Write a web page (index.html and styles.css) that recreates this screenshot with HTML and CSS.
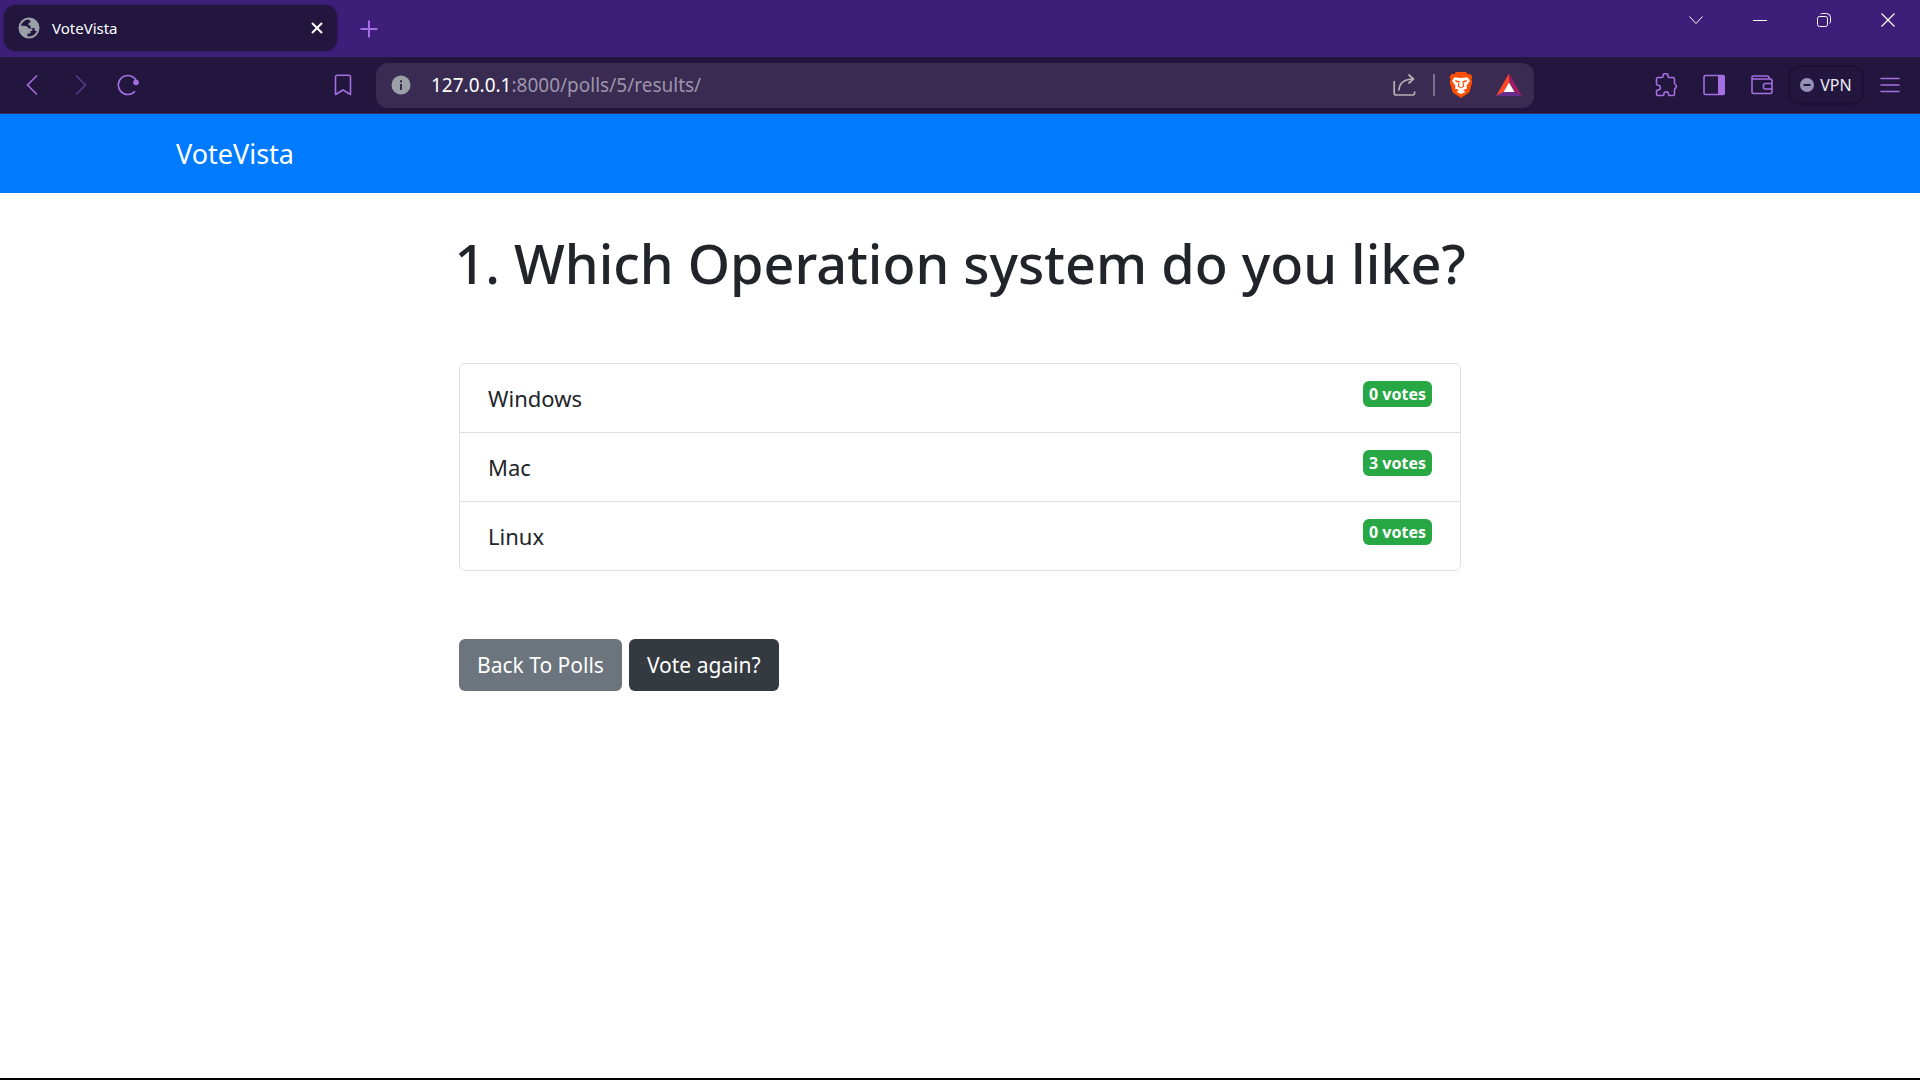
FILE: index.html
```html
<!DOCTYPE html>
<html lang="en">
<head>
<meta charset="utf-8">
<meta name="viewport" content="width=device-width, initial-scale=1">
<title>VoteVista</title>
<link rel="stylesheet" href="styles.css">
</head>
<body>
<header class="browser">
  <div class="tabstrip">
    <div class="tab">
      <svg class="tab-icon" width="22" height="22" viewBox="0 0 22 22"><circle cx="11" cy="11" r="9.5" fill="#22163f" stroke="#9aa0a8" stroke-width="2"/><path d="M11 1.5c5 0 9.500 4 9.500 9.500l-1 2.500c-1 1-3 .5-3-1v-1.500h-4V8.500h-2V6.500c0-1 2-.5 2-2s-2-1-2-3zM2 8.500l5.500.5c1.500 0 3 1.500 3 2.500h3c1.500 0 1.500 2.500 0 2.500h-1v2.500H9.500V20C5 20 1 15.500 1.500 11z" fill="#9aa0a8"/></svg>
      <span class="tab-title">VoteVista</span>
      <button class="icon-btn tab-close" aria-label="Close tab"><svg width="12" height="12" viewBox="0 0 12 12" fill="none" stroke="#fff" stroke-width="2"><path d="M1 1l10 10M11 1L1 11"/></svg></button>
    </div>
    <button class="icon-btn new-tab" aria-label="New tab"><svg width="18" height="18" viewBox="0 0 18 18" fill="none" stroke="#a46fe0" stroke-width="2"><path d="M9 .5v17M.5 9h17"/></svg></button>
    <div class="window-controls">
      <button class="icon-btn" aria-label="Search tabs"><svg width="14" height="14" viewBox="0 0 14 14" fill="none" stroke="#fff"><path d="M.5 3.500L7 10.500l6.500-7"/></svg></button>
      <button class="icon-btn" aria-label="Minimize"><svg width="14" height="14" viewBox="0 0 14 14" fill="none" stroke="#fff"><path d="M0 7.500h14"/></svg></button>
      <button class="icon-btn" aria-label="Restore"><svg width="14" height="14" viewBox="0 0 14 14" fill="none" stroke="#fff"><rect x=".5" y="3.500" width="10" height="10" rx="2"/><path d="M3.500 1.200Q4.300.5 5.500.5h4q4 0 4 4v4q0 1.500-1 2"/></svg></button>
      <button class="icon-btn" aria-label="Close"><svg width="14" height="14" viewBox="0 0 14 14" fill="none" stroke="#fff" stroke-width="1.200"><path d="M.5.5l13 13M13.500.5l-13 13"/></svg></button>
    </div>
  </div>
  <div class="toolbar">
    <div class="nav-buttons">
      <button class="icon-btn" aria-label="Back"><svg width="22" height="22" viewBox="0 0 22 22" fill="none" stroke="#a46fe0" stroke-width="1.600"><path d="M16 1.500L6.500 11l9.500 9.500"/></svg></button>
      <button class="icon-btn" aria-label="Forward" disabled><svg width="22" height="22" viewBox="0 0 22 22" fill="none" stroke="#5c3a87" stroke-width="1.600"><path d="M7 1.500L16.500 11 7 20.500"/></svg></button>
      <button class="icon-btn" aria-label="Reload"><svg width="22" height="22" viewBox="0 0 22 22" fill="none" stroke="#a46fe0" stroke-width="1.600"><path d="M18 17.200A9.500 9.500 0 1 1 19.200 6.500"/><circle cx="19" cy="8.500" r="2.800" fill="#a46fe0" stroke="none"/></svg></button>
      <button class="icon-btn bookmark" aria-label="Bookmark this page"><svg width="22" height="22" viewBox="0 0 22 22" fill="none" stroke="#a46fe0" stroke-width="1.600" stroke-linejoin="round"><path d="M5.500 1.300h11q2 0 2 2v17.200L11 16l-7.500 4.500V3.300q0-2 2-2z"/></svg></button>
    </div>
    <div class="address-bar">
      <button class="icon-btn site-info" aria-label="Site information"><svg width="20" height="20" viewBox="0 0 20 20"><circle cx="10" cy="10" r="9.500" fill="#9aa0a6"/><path d="M9 9h2v6H9zM9 5.300h2v2.200H9z" fill="#392b52"/></svg></button>
      <label class="host" for="url">127.0.0.1</label><input class="url" id="url" type="text" value=":8000/polls/5/results/" spellcheck="false">
      <div class="address-actions">
        <button class="icon-btn" aria-label="Share"><svg width="24" height="24" viewBox="0 0 24 24" fill="none" stroke="#b4b1b5" stroke-width="1.700"><path d="M2.200 8v12q0 2 2 2h17q1.500 0 1.500-3.500M7 17.500c0-6 4-11 14-11.500M16.500 1.500L21.500 6l-5 4.500"/></svg></button>
        <span class="divider"></span>
        <button class="icon-btn" aria-label="Brave Shields"><svg width="24" height="26" viewBox="0 0 24 26"><path d="M7 0h10l2 2.200 2.500-.2L23.500 5l-1 2 .8 3-3 10.500L12 26l-8.300-5.500L.7 10l.8-3-1-2 2-3L5 2.200z" fill="#fb4f04"/><path d="M5.500 5.300l6.500.8 6.500-.8 2.500 3.500-3.500 5 .5 2.700-4 1.500 2.500 2L12 22l-4.500-2 2.500-2-4-1.500.5-2.700-3.500-5z" fill="#fff"/><path d="M5.500 8l5 1v1.200L10 14l2 1.500 2-1.500-.5-3.800V9l5-1-1.500 2-2.500.5.8 4-3.300 2-3.300-2 .8-4L7 10z" fill="#fb4f04"/></svg></button>
        <button class="icon-btn" aria-label="Brave Rewards"><svg width="26" height="24" viewBox="0 0 26 24"><path d="M13 .5L0 23l7.500-4L13 9.500z" fill="#ff4724"/><path d="M13 .5L26 23l-7.500-4L13 9.500z" fill="#9e1f63"/><path d="M0 23h26l-7.500-4h-11z" fill="#662d91"/><path d="M13 9.500L7.500 19h11z" fill="#fff"/></svg></button>
      </div>
    </div>
    <div class="tools">
      <button class="icon-btn" aria-label="Extensions"><svg width="24" height="24" viewBox="0 0 24 24" fill="none" stroke="#a46fe0" stroke-width="1.600" stroke-linejoin="round"><path d="M4 4.500h4c1 0 1-1 1-1.500a2.500 2.500 0 0 1 5 0c0 .5 0 1.500 1 1.500h4q1.500 0 1.500 1.500v4c0 1 1 1.500 1.500 2.300a2.300 2.300 0 0 1 0 2.400c-.5.8-1.500 1-1.500 2V21q0 1.500-1.500 1.500h-3.500c-1 0-1-.5-1-1.500a2.300 2.300 0 0 0-4.600 0c0 1 0 1.500-1 1.500H4q-1.500 0-1.500-1.500v-3c0-1 .5-1 1.500-1a2.400 2.400 0 0 0 0-4.800c-1 0-1.500 0-1.500-1V6Q2.500 4.500 4 4.500z"/></svg></button>
      <button class="icon-btn" aria-label="Sidebar"><svg width="22" height="22" viewBox="0 0 22 22"><rect x="1" y="1.500" width="20" height="19" rx="1.500" fill="none" stroke="#a46fe0" stroke-width="1.600"/><path d="M15 1h5.500q1.500 0 1.500 1.500v17q0 1.500-1.500 1.500H15z" fill="#a46fe0"/></svg></button>
      <button class="icon-btn" aria-label="Wallet"><svg width="22" height="22" viewBox="0 0 22 22" fill="none" stroke="#a46fe0" stroke-width="1.600"><path d="M18 5V4q0-2-2-2H2.500Q1 2 1 3.500V18q0 1.500 1.500 1.500h17q1.500 0 1.500-1.500V6.500Q21 5 19.500 5H1M21 9.500h-6.500q-2 0-2 2v1.500q0 2 2 2H21"/></svg></button>
      <button class="vpn"><svg width="14" height="14" viewBox="0 0 14 14"><circle cx="7" cy="7" r="7" fill="#9691b5"/><path d="M3.500 7h7" stroke="#22163f" stroke-width="2"/></svg>VPN</button>
      <button class="icon-btn" aria-label="Menu"><svg width="20" height="16" viewBox="0 0 20 16" stroke="#a46fe0" stroke-width="1.600"><path d="M.5 1.500h19M.5 8h19M.5 14.500h19"/></svg></button>
    </div>
  </div>
</header>
<nav class="navbar"><div class="navbar-inner"><a class="brand" href="#">VoteVista</a></div></nav>
<main class="content">
  <h1 class="question">1. Which Operation system do you like?</h1>
  <div class="column">
    <ul class="results">
      <li class="result">Windows <span class="badge">0 votes</span></li>
      <li class="result">Mac <span class="badge">3 votes</span></li>
      <li class="result">Linux <span class="badge">0 votes</span></li>
    </ul>
    <div class="actions">
      <a class="btn btn-secondary" href="#">Back To Polls</a>
      <a class="btn btn-dark" href="#">Vote again?</a>
    </div>
  </div>
</main>
</body>
</html>
```
FILE: styles.css
```css
* { box-sizing: border-box; }

body {
  margin: 0;
  min-height: 100vh;
  display: flex;
  flex-direction: column;
  border-bottom: 2px solid #000;
  background: #fff;
  color: #212529;
  font-family: "Segoe UI", "Noto Sans", sans-serif;
  font-size: 22px;
  line-height: 34px;
}

button { font: inherit; cursor: pointer; }
svg { display: block; flex: none; }

.icon-btn {
  display: flex;
  align-items: center;
  justify-content: center;
  padding: 0;
  border: 0;
  background: none;
}

/* Browser frame */
.tabstrip {
  display: flex;
  height: 57px;
  padding-left: 4px;
  background: #3d1f7a;
}

.tab {
  display: flex;
  align-items: center;
  width: 333px;
  height: 46px;
  margin-top: 5px;
  padding: 0 8px 0 14px;
  border-radius: 12px;
  background: #22163f;
  box-shadow: 0 0 2px #22163f;
}

.tab-title {
  flex: 1;
  margin-left: 12px;
  color: #fff;
  font-size: 15px;
}

.tab-close { width: 24px; height: 24px; }
.new-tab { width: 64px; height: 57px; }

.window-controls {
  display: flex;
  margin-left: auto;
}

.window-controls .icon-btn { width: 64px; height: 40px; }

.toolbar {
  display: flex;
  align-items: center;
  height: 57px;
  border-bottom: 1px solid #40295c;
  background: #22163f;
}

.nav-buttons {
  display: flex;
  width: 376px;
  padding: 0 9px 0 8px;
}

.nav-buttons .icon-btn { width: 48px; height: 48px; }
.nav-buttons .bookmark { margin-left: auto; }

.address-bar {
  display: flex;
  flex: 1;
  align-items: center;
  height: 45px;
  border-radius: 12px;
  background: #392b52;
  font-size: 19px;
}

.site-info { width: 50px; height: 45px; }
.host { margin-left: 5px; color: #fff; }

.url {
  flex: 1;
  min-width: 0;
  padding: 0;
  border: 0;
  outline: 0;
  background: none;
  color: #9d95ab;
  font: inherit;
}

.address-actions {
  display: flex;
  align-items: center;
  padding-right: 1px;
}

.address-actions .icon-btn { width: 48px; height: 45px; }

.divider {
  width: 2px;
  height: 22px;
  margin: 0 2px 0 5px;
  background: #77708a;
}

.tools {
  display: flex;
  align-items: center;
  justify-content: flex-end;
  width: 386px;
  padding-right: 6px;
}

.tools .icon-btn { width: 48px; height: 48px; }

.vpn {
  display: flex;
  align-items: center;
  justify-content: center;
  gap: 6px;
  width: 76px;
  height: 40px;
  margin: 0 2px;
  padding: 0;
  border: 2px solid #1b1233;
  border-radius: 12px;
  background: none;
  color: #f0edf5;
  font-size: 16px;
}

/* Page */
.navbar {
  padding: 20px 16px;
  background: #007bff;
}

.navbar-inner {
  max-width: 1568px;
  margin: 0 auto;
}

.brand {
  display: block;
  color: #fff;
  font-size: 27px;
  line-height: 39px;
  text-decoration: none;
}

.content { padding-top: 35px; }

.column {
  max-width: 1002px;
  margin: 0 auto;
}

.question {
  margin: 0 0 65px;
  font-size: 54px;
  font-weight: 500;
  line-height: 70px;
  text-align: center;
}

.results {
  margin: 0 0 68px;
  padding: 0;
  border: 1px solid #dfdfdf;
  border-radius: 6px;
  list-style: none;
}

.result {
  display: flex;
  align-items: flex-start;
  justify-content: space-between;
  padding: 17px 28px;
}

.result + .result { border-top: 1px solid #dfdfdf; }

.badge {
  padding: 5px 6px;
  border-radius: 6px;
  background: #28a745;
  color: #fff;
  font-size: 16px;
  font-weight: 700;
  line-height: 16px;
}

.actions {
  display: flex;
  gap: 7px;
}

.btn {
  padding: 9px 18px;
  border-radius: 6px;
  color: #fff;
  font-size: 21px;
  text-decoration: none;
}

.btn-secondary { background: #6c757d; }
.btn-dark { background: #343a40; }
```
